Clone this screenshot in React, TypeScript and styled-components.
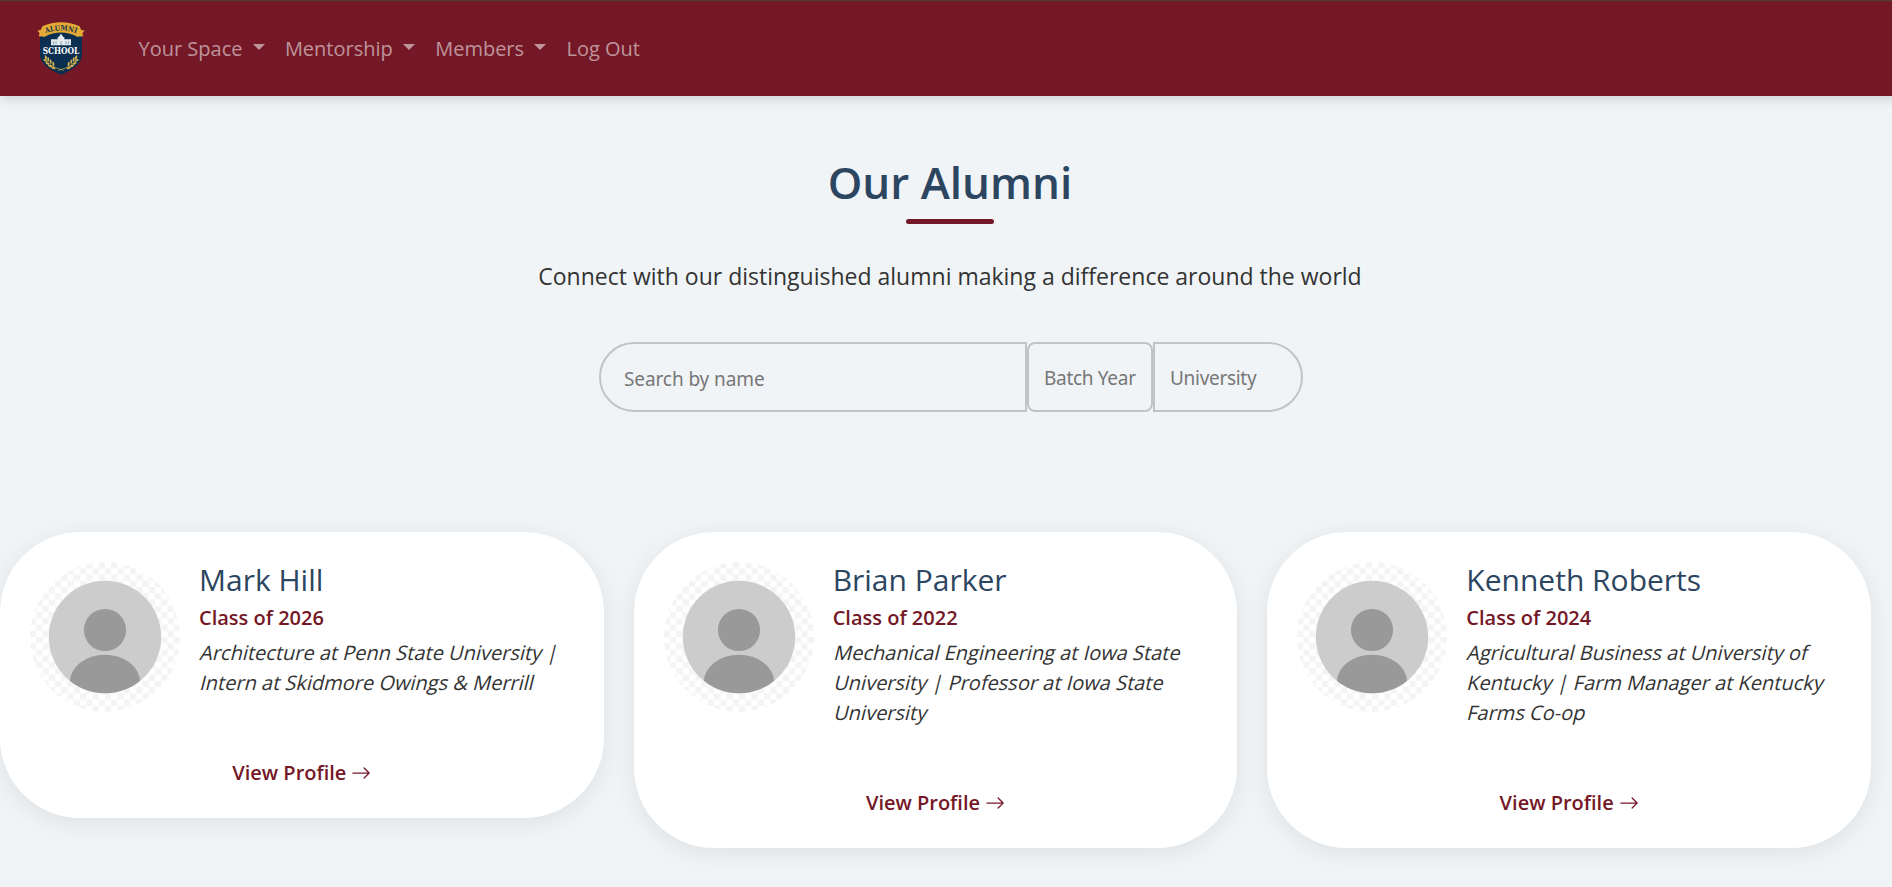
import React from "react";
import styled, { createGlobalStyle } from "styled-components";

const maroon = "#741726";
const navy = "#2c4560";

const GlobalStyle = createGlobalStyle`
  * { box-sizing: border-box; }
  html, body { margin: 0; }
  body {
    height: 887px;
    overflow: hidden;
    background: #f0f4f7;
    color: #333;
    font: 400 20px/30px "Open Sans", "Noto Sans", sans-serif;
  }
`;

const Page = styled.div`
  width: 1900px;
`;

const Navbar = styled.nav`
  display: flex;
  align-items: center;
  height: 96px;
  padding: 1px 0 0 37px;
  background: ${maroon};
  border-top: 1px solid #4a3e30;
  box-shadow: 0 2px 12px rgba(0, 0, 0, 0.17);
`;

const Brand = styled.a`
  display: flex;
  width: 101.5px;
  svg { display: block; overflow: visible; }
`;

const NavList = styled.ul`
  display: flex;
  margin: 0;
  padding: 0;
  list-style: none;
`;

const NavItem = styled.li<{ $menu?: boolean }>`
  display: flex;
  align-items: center;
  margin-right: 20px;
  color: rgba(255, 255, 255, 0.55);
  white-space: nowrap;

  &::after {
    content: "";
    display: ${(p) => (p.$menu ? "block" : "none")};
    margin: -4px 0 0 10.4px;
    border-top: 6px solid;
    border-left: 6px solid transparent;
    border-right: 6px solid transparent;
  }
`;

const Header = styled.header`
  display: flex;
  flex-direction: column;
  align-items: center;
  padding-top: 55px;
`;

const Title = styled.h1`
  margin: 0;
  color: ${navy};
  font-size: 44px;
  font-weight: 600;
  line-height: 62px;
`;

const Rule = styled.span`
  width: 88px;
  height: 5px;
  margin-top: 6px;
  border-radius: 3px;
  background: ${maroon};
`;

const Lead = styled.p`
  margin: 34px 0 0;
  font-size: 23px;
  line-height: 36px;
`;

const SearchBar = styled.form`
  display: flex;
  margin: 48px 0 0 2px;
`;

const Field = styled.input<{ $w: number; $radius: string; $pad: string; $track?: string }>`
  width: ${(p) => p.$w}px;
  height: 70px;
  padding: ${(p) => p.$pad};
  border: 2px solid #c3c3c3;
  border-radius: ${(p) => p.$radius};
  outline: 0;
  background: transparent;
  font: 400 19px "Noto Sans", sans-serif;
  letter-spacing: ${(p) => p.$track ?? "-0.1px"};
  &::placeholder { color: #777; opacity: 1; }
`;

const Cards = styled.main`
  display: grid;
  grid-template-columns: repeat(3, 1fr);
  align-items: start;
  gap: 30px;
  width: 1871px;
  margin-top: 120px;
`;

const Card = styled.article`
  padding: 30px;
  border-radius: 80px;
  background: #fff;
  box-shadow: 0 5px 25px rgba(0, 0, 0, 0.08);
`;

const CardTop = styled.div`
  display: flex;
  gap: 19px;
  svg { flex: none; display: block; }
`;

const Info = styled.div`
  flex: 1;
  min-width: 0;
  padding-bottom: 20px;
`;

const Name = styled.h2`
  margin: 0;
  color: ${navy};
  font-size: 30px;
  font-weight: 400;
  line-height: 36px;
`;

const ClassYear = styled.p`
  margin: 5px 0;
  color: ${maroon};
  font-weight: 600;
  line-height: 30px;
`;

const Bio = styled.p`
  margin: 0;
`;

/* Slants the upright face about its baseline, one line at a time. */
const BioLine = styled.span`
  display: block;
  white-space: nowrap;
  transform: skewX(-14deg);
  transform-origin: 0 22px;
`;

const ProfileLink = styled.a`
  display: flex;
  justify-content: center;
  align-items: center;
  gap: 5px;
  margin-top: 40px;
  color: ${maroon};
  font-weight: 600;
`;

function Crest() {
  const leaves = [
    [33, 108, 65], [31, 117, 25], [40, 114, 85], [37, 126, 30],
    [47, 121, 85], [45, 134, 25], [55, 128, 80], [55, 140, 15],
  ];
  const branch = leaves.map(([x, y, a]) => (
    <ellipse key={`${x}-${y}`} cx={x - 6} cy={y - 2} rx="6.5" ry="2.9" transform={`rotate(${a} ${x - 6} ${y - 2})`} />
  ));
  return (
    <svg width="48" height="54" viewBox="0 0 144 162">
      <path d="M9 37 Q72 14 135 37 V98 Q134 133 72 158 Q10 133 9 98Z" fill="#0b2f50" />
      <path d="M1 26 L12 23 L16 13 Q72-11 128 13 L132 23 L143 26 L136 34 L139 43 L121 44 Q72 19 23 44 L5 43 L8 34Z" fill="#e5aa35" />
      <path id="crest-arc" d="M24 35 Q72 16 120 35" fill="none" />
      <text fill="#17354c" fontFamily="DejaVu Serif" fontSize="22" fontWeight="700" textAnchor="middle">
        <textPath href="#crest-arc" startOffset="50%" textLength="94" lengthAdjust="spacingAndGlyphs">ALUMNI</textPath>
      </text>
      <path d="M42 52h20v-7h3l7-10 7 10h3v7h20v18H42z" fill="#e4e9ed" />
      <path d="M49 58v8M57 58v8M87 58v8M95 58v8M72 58v12" stroke="#6f8699" strokeWidth="2.5" />
      <text x="72" y="95" fill="#fff" fontFamily="DejaVu Serif" fontSize="29" fontWeight="700" textAnchor="middle" textLength="110" lengthAdjust="spacingAndGlyphs">SCHOOL</text>
      <g fill="#d6b34d">
        {branch}
        <g transform="translate(144 0) scale(-1 1)">{branch}</g>
      </g>
      <path d="M24 106Q32 134 80 145M120 106Q112 134 64 145" fill="none" stroke="#d6b34d" strokeWidth="2" />
    </svg>
  );
}

function Avatar({ id }: { id: string }) {
  return (
    <svg width="150" height="150" viewBox="0 0 150 150">
      <defs>
        <pattern id={`check-${id}`} width="12.5" height="12.5" patternUnits="userSpaceOnUse">
          <path d="M6.25 0h6.25v6.25H6.25zM0 6.25h6.25v6.25H0z" fill="#f4f4f4" />
        </pattern>
        <clipPath id={`disc-${id}`}><circle cx="75" cy="75" r="56.2" /></clipPath>
      </defs>
      <circle cx="75" cy="75" r="75" fill={`url(#check-${id})`} />
      <circle cx="75" cy="75" r="56.2" fill="#ccc" />
      <g fill="#999" clipPath={`url(#disc-${id})`}>
        <circle cx="75" cy="68" r="21.1" />
        <ellipse cx="75" cy="120.5" rx="35.2" ry="27.8" />
      </g>
    </svg>
  );
}

function Arrow() {
  return (
    <svg width="20" height="20" viewBox="0 0 16 16" fill="currentColor">
      <path fillRule="evenodd" d="M1 8a.5.5 0 0 1 .5-.5h11.793l-3.147-3.146a.5.5 0 0 1 .708-.708l4 4a.5.5 0 0 1 0 .708l-4 4a.5.5 0 0 1-.708-.708L13.293 8.5H1.5A.5.5 0 0 1 1 8" />
    </svg>
  );
}

const people = [
  { name: "Mark Hill", year: 2026, bio: ["Architecture at Penn State University |", "Intern at Skidmore Owings & Merrill"] },
  { name: "Brian Parker", year: 2022, bio: ["Mechanical Engineering at Iowa State", "University | Professor at Iowa State", "University"] },
  { name: "Kenneth Roberts", year: 2024, bio: ["Agricultural Business at University of", "Kentucky | Farm Manager at Kentucky", "Farms Co-op"] },
];

export default function App() {
  return (
    <Page>
      <GlobalStyle />
      <Navbar>
        <Brand><Crest /></Brand>
        <NavList>
          <NavItem $menu>Your Space</NavItem>
          <NavItem $menu>Mentorship</NavItem>
          <NavItem $menu>Members</NavItem>
          <NavItem>Log Out</NavItem>
        </NavList>
      </Navbar>
      <Header>
        <Title>Our Alumni</Title>
        <Rule />
        <Lead>Connect with our distinguished alumni making a difference around the world</Lead>
        <SearchBar>
          <Field $w={428} $radius="35px 0 0 35px" $pad="3px 22px 0 23px" placeholder="Search by name" />
          <Field $w={126} $radius="8px" $pad="2px 0 0 15px" $track="-0.3px" placeholder="Batch Year" />
          <Field $w={150} $radius="0 35px 35px 0" $pad="2px 15px 0" $track="-0.3px" placeholder="University" />
        </SearchBar>
      </Header>
      <Cards>
        {people.map((p) => (
          <Card key={p.name}>
            <CardTop>
              <Avatar id={String(p.year)} />
              <Info>
                <Name>{p.name}</Name>
                <ClassYear>Class of {p.year}</ClassYear>
                <Bio>{p.bio.map((line) => <BioLine key={line}>{line}</BioLine>)}</Bio>
              </Info>
            </CardTop>
            <ProfileLink>View Profile <Arrow /></ProfileLink>
          </Card>
        ))}
      </Cards>
    </Page>
  );
}
